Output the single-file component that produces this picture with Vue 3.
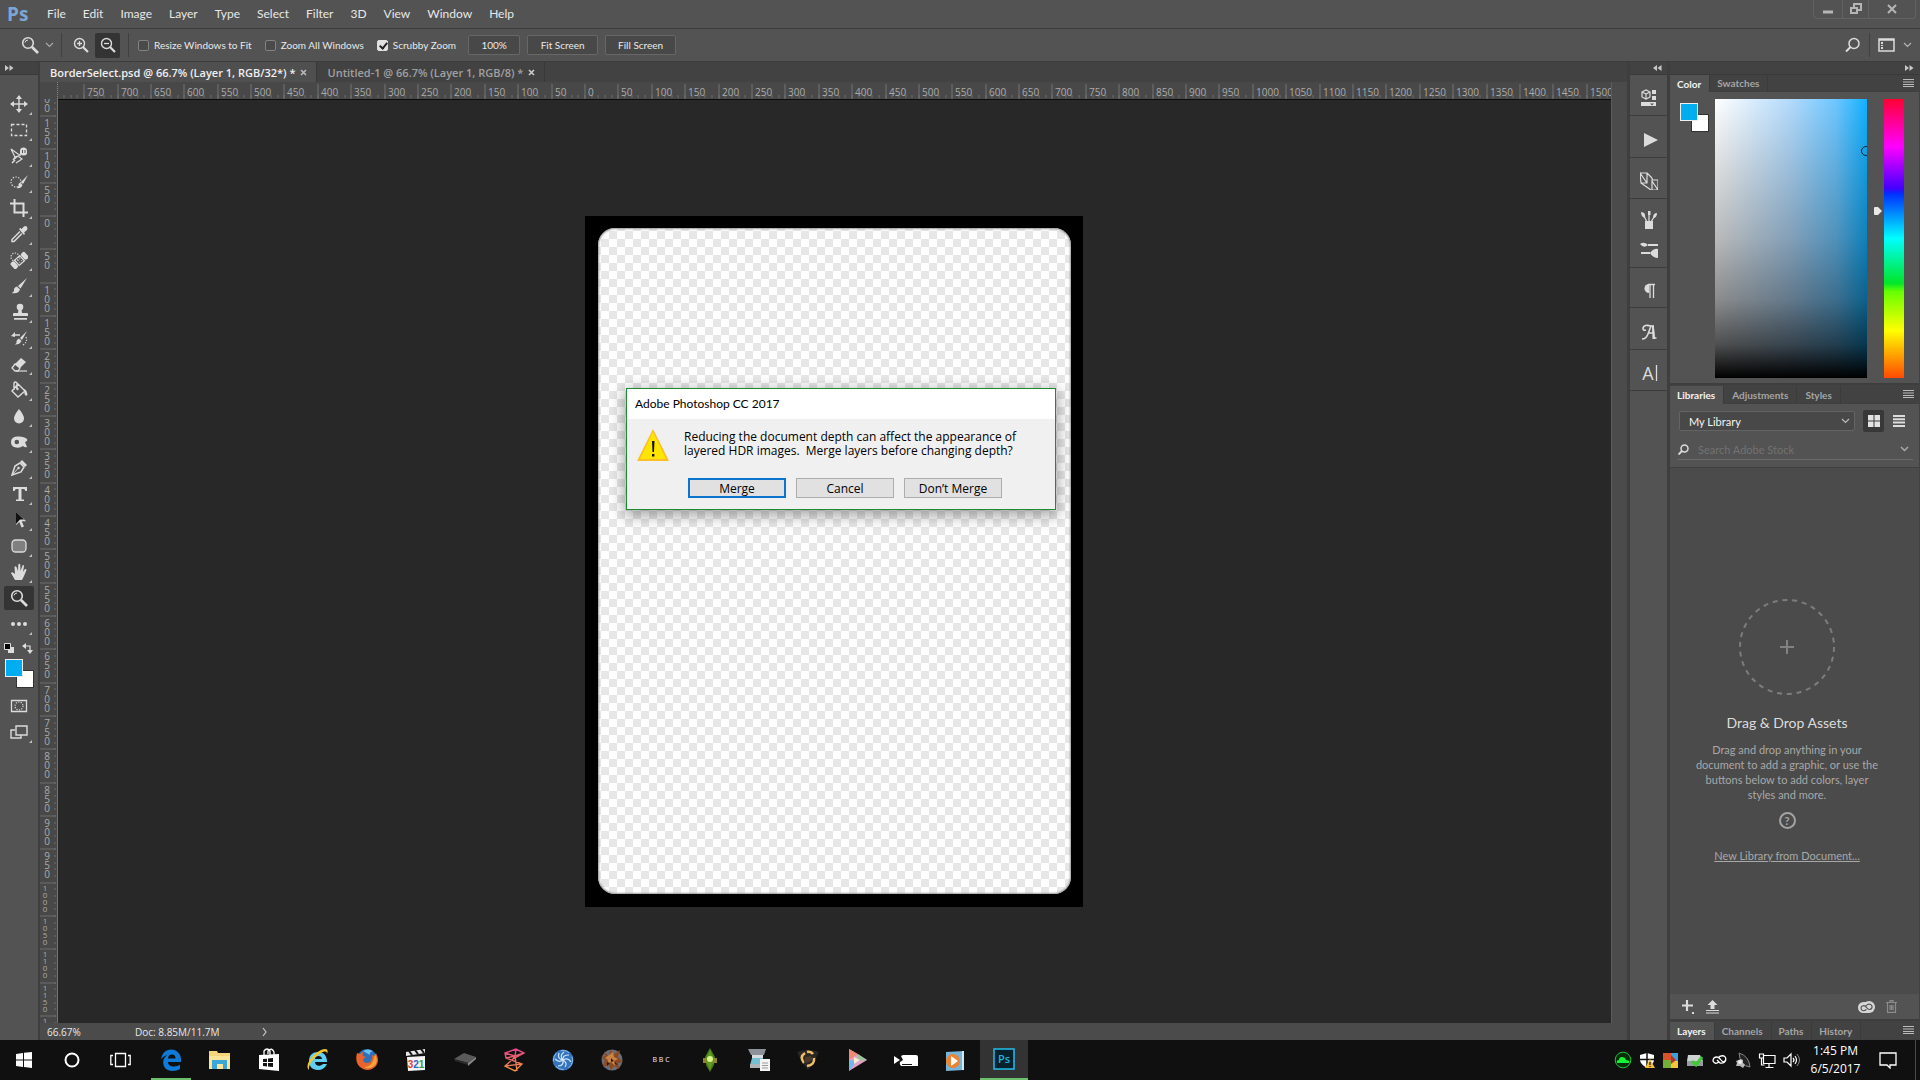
<script setup>
import { ref } from 'vue'

const menus = ['File', 'Edit', 'Image', 'Layer', 'Type', 'Select', 'Filter', '3D', 'View', 'Window', 'Help']

const resizeWindows = ref(false)
const zoomAll = ref(false)
const scrubby = ref(true)
const zoomLevel = ref('66.67%')

const F = '#dcdcdc'
const tools = [
  { name: 'Move', icon: `<path d="M9 1v16M1 9h16" stroke="${F}" stroke-width="1.4"/><path d="M9 0l3 4H6zM9 18l3-4H6zM0 9l4-3v6zM18 9l-4-3v6z" fill="${F}"/>` },
  { name: 'Rectangular Marquee', icon: `<rect x="1.5" y="3.5" width="15" height="11" fill="none" stroke="${F}" stroke-width="1.3" stroke-dasharray="3 2"/>` },
  { name: 'Magnetic Lasso', icon: `<path d="M1 2l7 5 3 1M1 2l4 8-2 3M3 13l5-4 4 3-6 4M5 10l6-2" fill="none" stroke="${F}" stroke-width="1.2"/><path d="M10 7V4q0-3.500 3.500-3.500T17 4v3q-3 3-7 0z" fill="${F}"/><path d="M12.500 3v3M15 3v3" stroke="#535353"/><path d="M2 16l3-3" stroke="${F}" stroke-width="1.600"/>` },
  { name: 'Quick Selection', icon: `<circle cx="6" cy="9" r="5" fill="none" stroke="${F}" stroke-width="1.200" stroke-dasharray="1.300 1.500"/><path d="M18 2l-7 7 2 2z" fill="${F}"/><path d="M10 9.500l2.500 2.500q-1.500 4-6 3 2.500-1 2-4z" fill="${F}"/>` },
  { name: 'Crop', icon: `<path d="M4.500 0v13.500H18M0 4.500h13.500V18" fill="none" stroke="${F}" stroke-width="2"/>` },
  { name: 'Eyedropper', icon: `<path d="M10 6.500l-8 8v2h2l8-8" fill="none" stroke="${F}" stroke-width="1.500"/><path d="M9 4l1.500-1 1 1L14 1.500q2-1 3 .5t0 3L14 7.500l1 1L14 10z" fill="${F}"/>` },
  { name: 'Spot Healing Brush', icon: `<circle cx="5" cy="6" r="4" fill="none" stroke="${F}" stroke-width="1.200" stroke-dasharray="1.200 1.400"/><g transform="rotate(-42 9.500 9.500)"><rect x="0" y="5.500" width="5" height="8" rx="2" fill="${F}"/><rect x="14" y="5.500" width="5" height="8" rx="2" fill="${F}"/><rect x="6" y="6" width="7" height="7" fill="none" stroke="${F}" stroke-width="1.300"/><path d="M8 8h1v1H8zM10.500 8h1v1h-1zM8 10.500h1v1H8zM10.500 10.500h1v1h-1z" fill="${F}"/></g>` },
  { name: 'Brush', icon: `<path d="M17 1l-9 8 2.500 2.500z" fill="${F}"/><path d="M7 9.500l3 3q-2 5-8.500 3.500 3-1 2.500-4 1-2.500 3-2.500z" fill="${F}"/>` },
  { name: 'Clone Stamp', icon: `<circle cx="10" cy="4" r="3.300" fill="${F}"/><path d="M8.500 6h3l.5 4h5q1 0 1 1v2H3v-2q0-1 1-1h4zM4 15h13v1.700H4z" fill="${F}"/>` },
  { name: 'History Brush', icon: `<path d="M17 2l-7 7 2 2z" fill="${F}"/><path d="M9 9.500l2.500 2.500q-2 4-7 3.500 2.500-1 2-3.500 1-2 2.500-2.500zM5 3v5L1 7z" fill="${F}"/><path d="M4 6h6" stroke="${F}" stroke-width="1.500"/><path d="M16 8q2 5-3 8" fill="none" stroke="${F}" stroke-width="1.200" stroke-dasharray="1.200 1.500"/>` },
  { name: 'Eraser', icon: `<path d="M11 3l5 4-6 6-5-4z" fill="${F}"/><path d="M5 9l5 4-2 3H5l-3-3z" fill="none" stroke="${F}" stroke-width="1.300"/><path d="M6 16h11" stroke="${F}" stroke-width="1.200"/>` },
  { name: 'Paint Bucket', icon: `<path d="M8 3l7 7-7 6-6-6zM4 9V2q1-2 3 0v6" fill="none" stroke="${F}" stroke-width="1.400"/><path d="M14 8q3 1 3.500 6-2 2-3-1z" fill="${F}"/><circle cx="7.500" cy="8" r="1.200" fill="${F}"/>` },
  { name: 'Blur', icon: `<path d="M9 2q5 6 5 9.500a5 5 0 0 1-10 0Q4 8 9 2z" fill="${F}"/>` },
  { name: 'Burn', icon: `<path fill-rule="evenodd" d="M1 9q0-5 6-5.500 7-.5 10 2.500 1 2-2 3l2 5q-2 1-4-1-4 3-9 1-3-1.500-3-5zm3.500 0a2.300 2.300 0 1 0 4.600 0 2.300 2.300 0 0 0-4.600 0z" fill="${F}"/>` },
  { name: 'Pen', icon: `<path d="M2 16l3-9 5-3 4 4-3 5z" fill="none" stroke="${F}" stroke-width="1.500"/><path d="M2 16l5.500-6" stroke="${F}"/><circle cx="8.500" cy="9" r="1.300" fill="${F}"/><path d="M10 3l2-2 5 5-2 2z" fill="${F}"/>` },
  { name: 'Type', icon: `<path d="M3 2h14v4h-1.500q-.5-2-2-2H11.500v10.500H14V16H6v-1.500h2.500V4H6.500q-1.500 0-2 2H3z" fill="${F}"/>` },
  { name: 'Path Selection', icon: `<path d="M6 1v13l3.300-3 2.200 5.500 2.500-1-2.300-5.300h4.500z" fill="${F}"/><path d="M6 1v12l4-4.500h4z" fill="#111"/>` },
  { name: 'Rounded Rectangle', icon: `<rect x="2" y="3" width="14" height="12" rx="3.500" fill="#808080" stroke="${F}" stroke-width="1.300"/>` },
  { name: 'Hand', icon: `<path d="M5 17L1 10q1-2 4 1L4.500 4q1-1.500 2 0L8 8l.3-6.500q1-1.500 2 0L10.500 8l2-5.500q1.500-1 1.500.5l-1 6 2-3q1.500-.5 1.500 1L14 13l-2 4z" fill="${F}"/>` },
  { name: 'Zoom', active: true, icon: `<circle cx="7" cy="7" r="5.300" fill="none" stroke="${F}" stroke-width="1.600"/><path d="M4 6.500Q4.500 4 7 4" fill="none" stroke="${F}"/><path d="M11 11l6 6" stroke="${F}" stroke-width="2.600"/>` },
  { name: 'Edit Toolbar', icon: `<circle cx="3" cy="9" r="2" fill="${F}"/><circle cx="9" cy="9" r="2" fill="${F}"/><circle cx="15" cy="9" r="2" fill="${F}"/>` },
]

const docks = [
  { name: 'Properties', h: 41, icon: `<path d="M2 3l4-2 4 2v5l-4 2-4-2zM2 3l4 2 4-2M6 5v5" fill="none" stroke="${F}" stroke-width="1.200"/><path d="M12 1h4v4h-4zM12 7h4v4h-4zM1 13h15v4H1z" fill="${F}"/><path d="M10 14.500h4l-2 2z" fill="#555"/>` },
  { name: 'Actions', h: 42, icon: `<path d="M4 2l14 7-14 7z" fill="${F}"/>` },
  { name: 'Clone Source', h: 41, icon: `<path d="M0 1h7v10H1L0 1l7 10M7 1l5 5M1 11l10 7M12 8h6v10h-6zM12 9l6 9M11 5l2 3" fill="none" stroke="${F}" stroke-width="1.200"/>` },
  { name: 'Brush Presets', h: 36, icon: `<path d="M5 10h8v8H5z" fill="${F}"/><path d="M7 11L4 5M9 11V4M11 11l3-5" stroke="${F}" stroke-width="1.300"/><path d="M1 1q5 0 4 6-4-1-4-6zM8 0h2.500v4H8zM17 2q-4 0-4 5 4 0 4-5z" fill="${F}"/>`, joined: true },
  { name: 'Brush', h: 33, low: true, icon: `<path d="M8 5h10M1 13h9" stroke="${F}" stroke-width="2"/><path d="M0 4q4-3 8 1-4 4-8-1zM10 13q4-5 8-4v9q-5 0-8-5z" fill="${F}"/>` },
  { name: 'Paragraph', h: 40, icon: `<path d="M9 2a4.500 4.500 0 0 0 0 9z" fill="${F}"/><path d="M10 2v14M13.500 2v14M8 2.500h7" stroke="${F}" stroke-width="1.300"/>` },
  { name: 'Glyphs', h: 42, icon: `<path d="M2 16q4 0 6-5l3-8h2l1 12h2.500M8 10h6M11 3Q4 1 3 5q0 3 3 2" fill="none" stroke="${F}" stroke-width="1.600"/><path d="M12 2.500h1.800L15 16h-2.500z" fill="${F}"/>` },
  { name: 'Character', h: 41, icon: `<text x="8" y="16" text-anchor="middle" font-family="Open Sans, sans-serif" font-size="18" fill="${F}">A</text><path d="M16.500 1v16" stroke="${F}" stroke-width="1.300"/>` },
]

const taskbar = [
  { name: 'Start', icon: `<path d="M4 6l7-1v6.500H4zM12 4.800L20 4v7.500h-8zM4 12.500h7V19l-7-1zM12 12.500h8V20l-8-1z" fill="#fff"/>` },
  { name: 'Cortana', icon: `<circle cx="11" cy="12" r="6.500" fill="none" stroke="#fff" stroke-width="2"/>` },
  { name: 'Task View', icon: `<path d="M5.500 5.500h10v13h-10zM3 7.500H.8v9H3M18 7.500h2.200v9H18" fill="none" stroke="#fff" stroke-width="1.300"/>` },
  { name: 'Edge', open: true, icon: `<path d="M2 11.500C3 5 7 1.500 12 1.500c6 0 10 4.500 10 10v2.500H9c.3 3.500 3 4.500 6 4.500 2.300 0 4.300-.7 6-1.700v4.200c-2 1.200-4.500 2-7.500 2C7.500 23 4 19 4.200 14c.1-3 1.700-5.500 4.300-7-3 .6-5.200 2.300-6.500 4.500zM9 10.500h7.500c0-2.500-1.200-4-3.500-4s-3.700 1.600-4 4z" fill="#0f7ad8"/>` },
  { name: 'File Explorer', icon: `<path d="M1 3h8l1 2h12v16H1z" fill="#f5d67a"/><path d="M1 8h21v13H1z" fill="#fbe59b"/><path d="M4 12h15v9h-4v-5H9v5H4z" fill="#3aa7d8"/>` },
  { name: 'Store', icon: `<path d="M2 7l20-1v17L2 21z" fill="#fff"/><path d="M7 8V3q3-4 6 0v4M11 6V3q4-4 6 1v3" fill="none" stroke="#fff" stroke-width="1.300"/><path d="M6 11l4-.3V14H6zM11 10.500l5-.5v4h-5zM6 15h4v3.500L6 18zM11 15h5v4l-5-.5z" fill="#111"/>` },
  { name: 'Internet Explorer', icon: `<path d="M3 13C3 7 7 4 12 4c6 0 9 4 9 10H9c0 4 5 5 8 2h4c-2 4-5 6-9 6-6 0-9-4-9-9zm6-2h7c0-4-7-4-7 0z" fill="#5fd0f3"/><path d="M3 22C-2 18 6 6 15 2c5-2 8-1 6 4 0-3-2-3-6-1C8 9 2 17 3 22z" fill="#f4c62e"/>` },
  { name: 'Firefox', icon: `<circle cx="12" cy="11" r="10" fill="#2f70b8"/><path d="M8 3q5-3 10 0-4 1-3 4z" fill="#67c2ef"/><path d="M2 5l3 1q2-2 4-2-2 2-1 4l3 1-3 2q0 4 4 4 6-1 5-8 3 2 3 0l1-2q4 8 0 13-6 6-13 3Q-1 16 2 5z" fill="#e8642c"/><path d="M20 6q4 8-1 12-5 4-10 1 9 0 11-13z" fill="#f8a53a"/>` },
  { name: 'Media Player Classic', icon: `<path d="M2 4l19-3v4L2 8z" fill="#e8e8e8"/><path d="M5 3l3 4M11 2l3 4M17 1l3 4" stroke="#111" stroke-width="2"/><path d="M3 9l18-1v14l-17 1z" fill="#f4f4f4"/><text x="12" y="20" text-anchor="middle" font-family="Liberation Sans, sans-serif" font-size="10" font-weight="bold"><tspan fill="#d6452a">3</tspan><tspan fill="#2b66c4">2</tspan><tspan fill="#3a9c3a">1</tspan></text>` },
  { name: 'Drive', icon: `<path d="M1 11l10-6 12 4-8 6z" fill="#5a5a5a"/><path d="M1 11l14 4v2L2 13z" fill="#2c2c2c"/><path d="M15 15l8-6v2l-8 7z" fill="#8a8a8a"/>` },
  { name: 'Mesh', icon: `<defs><linearGradient id="mesh" x1="0" y1="0" x2="0" y2="24" gradientUnits="userSpaceOnUse"><stop stop-color="#e0408c"/><stop offset="1" stop-color="#f39a3c"/></linearGradient></defs><path d="M14 1L3 5l1 5 16 6-7 7-10-5 8-7 11-6zM3 5l10 3 9-3M4 10l9-2 2 15M3 18l17-2M14 1l-1 7-2 3" fill="none" stroke="url(#mesh)" stroke-width="1.400"/>` },
  { name: 'Swirl', icon: `<circle cx="12" cy="12" r="10.500" fill="#3473bd"/><path d="M12 12q-4-4 1-8M12 12q-1-5 6-5M12 12q5-3 8 2M12 12q5 3 2 7M12 12q1 6-5 6M12 12q-4 3-8-1M12 12q-6-1-4-7" fill="none" stroke="#cfe5fa" stroke-width="1.200"/><circle cx="12" cy="12" r="9.500" fill="none" stroke="#8fbdea" stroke-dasharray="9 5"/>` },
  { name: 'Game', icon: `<circle cx="12" cy="12" r="10.500" fill="#6c6d75"/><path d="M4 4l5 4 1-6 4 4 6-4-2 7 5 5-5 1 1 6-5-3-3 4-2-5-6 2 2-7-4-3 4-1z" fill="#8a4a24"/><path d="M9 7l4-3 1 5 4 2-4 2 1 5-4-4-4 3 1-5-3-2z" fill="#c98444"/><path d="M11 10l3 3-3 1zM7 14l3 1-3 3zM15 14l3 3-3-1z" fill="#2c1b18"/>` },
  { name: 'BBC', icon: `<text x="12" y="14" text-anchor="middle" font-family="Open Sans, sans-serif" font-size="7" fill="#f0f0f0">B B C</text>` },
  { name: 'Plumbob', icon: `<path d="M12 0l5 9-1 8-4 7-4-7-1-8z" fill="#4a7a18"/><path d="M5 10h14v5h-4l-3 5-3-5H5z" fill="#8d8430"/><path d="M12 2l4 9-4 11-4-11z" fill="#5c9a22"/><circle cx="12" cy="11" r="3" fill="#d8f58c"/>` },
  { name: 'Scanner', icon: `<path d="M1 1h18l-2 6H4z" fill="#8c9298"/><path d="M5 7h11v5H5z" fill="#d8dde0"/><path d="M5 10h11v7H3z" fill="#75bfd2"/><path d="M3 16h12v4H3z" fill="#aeb5ba"/><path d="M13 11h10v12H13z" fill="#f4f4f4"/><path d="M15 15h6M15 17.500h6M15 20h6" stroke="#999"/>` },
  { name: 'Sync', icon: `<path d="M1 4q5-2 11-2t11 2l-5 10-6 8-6-8z" fill="#2a2723"/><path d="M8 15Q3 9 9 5M11 18q8-1 7-8M11 4q4-1 6 2" fill="none" stroke="#eebd69" stroke-width="2.600"/><path d="M9 9l6-1 2 3-4 3-5 1z" fill="#4b3a2a"/>` },
  { name: 'Play', icon: `<path d="M4 1l18 11L4 23z" fill="#e79fc8"/><path d="M4 1l9 5-9 6z" fill="#ee8a78"/><path d="M13 6l9 6-10 1z" fill="#9ec49a"/><path d="M4 12l8 1-8 10z" fill="#6fb9e8"/><path d="M9 9l6 3-6 4z" fill="#f6eed3"/>` },
  { name: 'Camera', icon: `<path d="M0 8l6 4-6 4zM9 7h13q2 0 2 2v9H7q-2-2-1-4l3-2-2-4z" fill="#fff"/><path d="M8 16.500h10" stroke="#111"/>` },
  { name: 'Windows Media Player', icon: `<path d="M3 4l18-1v19l-18 1z" fill="#78b4d8"/><path d="M19 3h2v19h-2z" fill="#d1e9f6"/><circle cx="10" cy="13" r="7" fill="#ec8331"/><path d="M8 8l7 5-7 5z" fill="#fff"/>` },
  { name: 'Photoshop', open: true, current: true, icon: `<rect x="2" y="1" width="20" height="20" fill="#06202c" stroke="#22b5df" stroke-width="1.600"/><text x="12" y="15" text-anchor="middle" font-family="Open Sans, sans-serif" font-size="11" font-weight="600" fill="#22b5df">Ps</text>` },
]

const tray = [
  { name: 'Cloud backup', icon: `<circle cx="9" cy="9" r="7.800" fill="#082c08" stroke="#1bc531" stroke-width="1"/><path d="M3 12q-1-3 2-3 0-3 3-3t4 3q4 0 3 3z" fill="#12f435"/>` },
  { name: 'Windows Defender', icon: `<path d="M9 2l7 2v5q0 4-7 8-7-4-7-8V4z" fill="#fff"/><path d="M9 2v15M2 8.500h14" stroke="#111" stroke-width="1.500"/><path d="M12 8l5 9H7z" fill="#f7bd31"/><path d="M12 11v3M12 15v1" stroke="#222" stroke-width="1.300"/>` },
  { name: 'Updater', icon: `<path d="M1 2h8v7H1z" fill="#db512c"/><path d="M9 2h7v8H9z" fill="#3e9fd9"/><path d="M1 9h8v8H1z" fill="#75ad3b"/><path d="M9 10h7v7H9z" fill="#f5c439"/><path d="M9 4l5 5-5 4z" fill="#bd302c"/>` },
  { name: 'Safely Remove', icon: `<path d="M2 4h12l3 6v4H1v-4z" fill="#cdd3d3"/><path d="M1 10h16v5H1z" fill="#90a09a"/><path d="M6 10l4 4 6-8" fill="none" stroke="#43c935" stroke-width="3"/>` },
  { name: 'Creative Cloud', icon: `<path d="M9 11Q5 14 3 10q0-4 4-4 2 0 4 3 2 3 4 1 2-3-1-5-4-1-6 2M7 9l3 3q4 1 6-3" fill="none" stroke="#fff" stroke-width="1.300"/>` },
  { name: 'Satellite', icon: `<path d="M5 2q10 3 11 14-10-1-11-14z" fill="#222" stroke="#888"/><path d="M7 8l2 1v3l2 2-2 3-3-2H2l1-3-1-2z" fill="#b8b8b8"/><circle cx="6" cy="11" r="2" fill="#eee"/>` },
  { name: 'Network', icon: `<path d="M5.500 4.500H17v8H5.500zM11 13v3M7.500 16.500h8M1.500 3v4h4V3zM3.500 7v7h3" fill="none" stroke="#fff" stroke-width="1.200"/>` },
  { name: 'Volume', icon: `<path d="M2 7h3l4-4v12l-4-4H2zM11 7q2 2 0 4M13 5q3 4 0 8" fill="none" stroke="#fff" stroke-width="1.200"/><path d="M15 3q5 6 0 12" fill="none" stroke="#888"/>` },
]

// Screen pixels covered by one labelled interval of 50 document pixels.
const H_STEP = 33.39
const V_STEP = 100 / 3
const H_ORIGIN = 527
const V_ORIGIN = 117

const hMajor = Array.from({ length: 46 }, (_, i) => i - 15).map((n) => ({
  x: Math.round(H_ORIGIN + n * H_STEP),
  label: Math.abs(n * 50),
}))
const vMajor = Array.from({ length: 29 }, (_, i) => i - 4).map((n) => {
  const y = Math.round(V_ORIGIN + n * V_STEP)
  const chars = String(Math.abs(n * 50)).split('')
  const tiny = chars.length > 3
  return {
    y,
    tiny,
    digits: chars.map((d, i) => ({ d, y: tiny ? y + 8 + i * 7 : y + 11 + i * 9 })),
  }
})
const hMinor = Array.from({ length: 300 }, (_, i) => `M${Math.round(H_ORIGIN + (i - 79) * H_STEP / 5)} 13v3`).join('')
const vMinor = Array.from({ length: 160 }, (_, i) => `M14 ${Math.round(V_ORIGIN + (i - 17) * V_STEP / 5)}h2`).join('')
</script>

<template>
  <div class="app">
    <header class="menubar">
      <span class="logo">Ps</span>
      <nav class="menus">
        <button v-for="m in menus" :key="m" type="button">{{ m }}</button>
      </nav>
      <div class="winctl">
        <button type="button" class="w-min" aria-label="Minimize"><svg width="12" height="12"><path d="M1 9h10" stroke="#b5b5b5" stroke-width="3" /></svg></button>
        <button type="button" class="w-res" aria-label="Restore"><svg width="12" height="12"><path d="M4 4V1h7v6H8M1 5h6v5H1z" fill="none" stroke="#b5b5b5" stroke-width="2" /></svg></button>
        <button type="button" class="w-close" aria-label="Close"><svg width="12" height="12"><path d="M2 2l8 8M10 2l-8 8" stroke="#b5b5b5" stroke-width="2" /></svg></button>
      </div>
    </header>

    <div class="options">
      <button type="button" class="ob current-tool" aria-label="Zoom tool"><svg width="18" height="18" v-html="tools[19].icon" /></button>
      <svg class="caret" width="9" height="6"><path d="M1 1l3.500 3.500L8 1" fill="none" stroke="#aaa" stroke-width="1.200" /></svg>
      <i class="vr first" />
      <button type="button" class="ob" aria-label="Zoom in"><svg width="16" height="16"><circle cx="6.500" cy="6.500" r="5" fill="none" stroke="#dcdcdc" stroke-width="1.400" /><path d="M10 10l5 5" stroke="#dcdcdc" stroke-width="2.200" /><path d="M4 6.500h5M6.500 4v5" stroke="#dcdcdc" stroke-width="1.300" /></svg></button>
      <button type="button" class="ob on" aria-label="Zoom out"><svg width="16" height="16"><circle cx="6.500" cy="6.500" r="5" fill="none" stroke="#dcdcdc" stroke-width="1.400" /><path d="M10 10l5 5" stroke="#dcdcdc" stroke-width="2.200" /><path d="M4 6.500h5" stroke="#dcdcdc" stroke-width="1.300" /></svg></button>
      <i class="vr second" />
      <label class="check"><input v-model="resizeWindows" type="checkbox"><span>Resize Windows to Fit</span></label>
      <label class="check"><input v-model="zoomAll" type="checkbox"><span>Zoom All Windows</span></label>
      <label class="check"><input v-model="scrubby" type="checkbox"><span>Scrubby Zoom</span></label>
      <div class="fits">
        <button type="button" class="fit small">100%</button>
        <button type="button" class="fit">Fit Screen</button>
        <button type="button" class="fit">Fill Screen</button>
      </div>
      <div class="opt-right">
        <svg width="16" height="16"><circle cx="9" cy="6.500" r="5" fill="none" stroke="#dcdcdc" stroke-width="1.500" /><path d="M5.500 10L1 14.500" stroke="#dcdcdc" stroke-width="2" /></svg>
        <i class="vr" />
        <svg width="17" height="14"><path d="M1 1h15v12H1zM1 2h15" fill="none" stroke="#dcdcdc" stroke-width="1.500" /><path d="M3 4h2v2H3zM3 7h2v1H3zM3 9h2v2H3z" fill="#dcdcdc" /></svg>
        <svg width="9" height="6"><path d="M1 1l3.500 3.500L8 1" fill="none" stroke="#b5b5b5" stroke-width="1.200" /></svg>
      </div>
    </div>

    <main class="work">
      <aside class="toolbar">
        <div class="strip"><svg width="9" height="6"><path d="M0 0l4 3-4 3zM4.500 0l4 3-4 3z" fill="#c8c8c8" /></svg></div>
        <div class="grip" />
        <button v-for="t in tools" :key="t.name" type="button" class="tool" :class="{ on: t.active }" :aria-label="t.name">
          <svg width="18" height="18" v-html="t.icon" />
          <i v-if="!t.active" class="corner" />
        </button>
        <div class="mini">
          <svg width="11" height="11"><path d="M4 4h6v6H4z" fill="#ddd" /><path d="M.5 .5h6v6h-6z" fill="#000" stroke="#ddd" /></svg>
          <svg width="11" height="11"><path d="M3 3h5v5" fill="none" stroke="#ddd" stroke-width="1.200" /><path d="M0 3l4-3v6zM8 11L5 7h6z" fill="#ddd" /></svg>
        </div>
        <div class="swatches"><i class="bg" /><i class="fg" /></div>
        <button type="button" class="tool" aria-label="Quick Mask"><svg width="18" height="18"><path d="M1.500 3.500h15v11h-15z" fill="none" stroke="#dcdcdc" stroke-width="1.300" /><circle cx="9" cy="9" r="4" fill="none" stroke="#dcdcdc" stroke-width="1.200" stroke-dasharray="1.200 1.300" /></svg></button>
        <button type="button" class="tool" aria-label="Screen Mode"><svg width="18" height="18"><path d="M5 7H1v8h10v-3M6 3h11v9H6z" fill="none" stroke="#dcdcdc" stroke-width="1.400" /></svg><i class="corner" /></button>
      </aside>

      <section class="doc-area">
        <div class="doc-tabs">
          <div class="doc-tab active"><button type="button" class="name">BorderSelect.psd @ 66.7% (Layer 1, RGB/32*) *</button><button type="button" class="x" aria-label="Close BorderSelect.psd"><svg width="7" height="7"><path d="M1 1l5 5M6 1L1 6" stroke="#bbb" stroke-width="1.600" /></svg></button></div>
          <div class="doc-tab"><button type="button" class="name">Untitled-1 @ 66.7% (Layer 1, RGB/8) *</button><button type="button" class="x" aria-label="Close Untitled-1"><svg width="7" height="7"><path d="M1 1l5 5M6 1L1 6" stroke="#ccc" stroke-width="1.600" /></svg></button></div>
        </div>
        <div class="doc-body">
          <div class="doc-main">
            <div class="top-ruler">
              <i class="ruler-corner" />
              <svg class="hruler" height="17">
                <path :d="hMinor" stroke="#6c6c6c" />
                <g v-for="m in hMajor" :key="m.x">
                  <path :d="`M${m.x} 2v15`" stroke="#737373" />
                  <text :x="m.x + 3" y="14">{{ m.label }}</text>
                </g>
              </svg>
            </div>
            <div class="view">
              <svg class="vruler" width="18">
                <path :d="vMinor" stroke="#6c6c6c" />
                <g v-for="m in vMajor" :key="m.y">
                  <path :d="`M0 ${m.y}h16`" stroke="#6c6c6c" />
                  <text v-for="g in m.digits" :key="g.y" :x="m.tiny ? 5 : 7" :y="g.y" text-anchor="middle" :class="{ tiny: m.tiny }">{{ g.d }}</text>
                </g>
                <path d="M17.500 0v2000" stroke="#747474" />
              </svg>
              <div class="canvas">
                <div class="artboard"><div class="paper" /></div>
                <div class="dialog" role="dialog" aria-labelledby="dlg-title">
                  <h1 id="dlg-title">Adobe Photoshop CC 2017</h1>
                  <div class="msg">
                    <svg width="32" height="32"><path d="M16 0l16 32H0z" fill="#fcbf28" /><path d="M16 3l13 27H3z" fill="#ffe500" /><path d="M15 12h2.500l-.5 11h-1.500zM15 25h2.400v2.500H15z" fill="#111" /></svg>
                    <p>Reducing the document depth can affect the appearance of<br>layered HDR images.&nbsp; Merge layers before changing depth?</p>
                  </div>
                  <div class="actions">
                    <button type="button" class="default">Merge</button>
                    <button type="button">Cancel</button>
                    <button type="button">Don’t Merge</button>
                  </div>
                </div>
              </div>
            </div>
          </div>
          <div class="vscroll" />
        </div>
        <footer class="status">
          <input v-model="zoomLevel" aria-label="Zoom level">
          <span class="docsize">Doc: 8.85M/11.7M</span>
          <svg width="6" height="10"><path d="M1 1l3 4-3 4" fill="none" stroke="#c8c8c8" stroke-width="1.200" /></svg>
        </footer>
      </section>

      <aside class="dock">
        <div class="strip end"><svg width="9" height="6"><path d="M4 0L0 3l4 3zM8.500 0l-4 3 4 3z" fill="#c8c8c8" /></svg></div>
        <button v-for="d in docks" :key="d.name" type="button" class="dock-item" :class="{ joined: d.joined, low: d.low }" :style="{ height: d.h + 'px' }" :aria-label="d.name">
          <svg width="18" height="18" v-html="d.icon" />
        </button>
      </aside>

      <aside class="panels">
        <div class="strip end"><svg width="9" height="6"><path d="M0 0l4 3-4 3zM4.500 0l4 3-4 3z" fill="#c8c8c8" /></svg></div>
        <div class="ptabs">
          <button type="button" class="active">Color</button><button type="button">Swatches</button>
          <svg class="burger" width="11" height="8"><path d="M0 .5h11M0 3h11M0 5.500h11M0 7.500h11" stroke="#bbb" /></svg>
        </div>
        <section class="color">
          <div class="swatches big"><i class="bg" /><i class="fg" /></div>
          <div class="field"><i class="ring" /></div>
          <div class="hue"><svg class="knob" width="8" height="8"><path d="M0 1q0-1 1-1h3l4 4-4 4H1q-1 0-1-1z" fill="#e8e8e8" /></svg></div>
        </section>
        <div class="ptabs libs">
          <button type="button" class="active">Libraries</button><button type="button">Adjustments</button><button type="button">Styles</button>
          <svg class="burger" width="11" height="8"><path d="M0 .5h11M0 3h11M0 5.500h11M0 7.500h11" stroke="#bbb" /></svg>
        </div>
        <section class="lib-head">
          <div class="lib-row">
            <div class="pick">
              <select aria-label="Library"><option>My Library</option></select>
              <svg width="9" height="6"><path d="M1 1l3.500 3.500L8 1" fill="none" stroke="#bbb" stroke-width="1.200" /></svg>
            </div>
            <button type="button" class="mode on" aria-label="Grid view"><svg width="12" height="12"><path d="M0 0h5.500v5.500H0zM6.500 0H12v5.500H6.500zM0 6.500h5.500V12H0zM6.500 6.500H12V12H6.500z" fill="#e2e2e2" /></svg></button>
            <button type="button" class="mode" aria-label="List view"><svg width="12" height="12"><path d="M0 1h12M0 4.300h12M0 7.600h12M0 11h12" stroke="#dcdcdc" stroke-width="2" /></svg></button>
          </div>
          <div class="search">
            <svg width="11" height="11"><circle cx="6.500" cy="4.500" r="3.500" fill="none" stroke="#dcdcdc" stroke-width="1.500" /><path d="M4 7l-3.500 3.500" stroke="#dcdcdc" stroke-width="1.800" /></svg>
            <input type="text" placeholder="Search Adobe Stock" aria-label="Search Adobe Stock">
            <svg width="9" height="6"><path d="M1 1l3.500 3.500L8 1" fill="none" stroke="#aaa" stroke-width="1.500" /></svg>
          </div>
        </section>
        <section class="drop">
          <svg width="98" height="98"><circle cx="49" cy="49" r="47" fill="none" stroke="#7d7d7d" stroke-width="2" stroke-dasharray="5 4.840" /><path d="M49 42v14M42 49h14" stroke="#828282" stroke-width="2" /></svg>
          <h2>Drag &amp; Drop Assets</h2>
          <p>Drag and drop anything in your<br>document to add a graphic, or use the<br>buttons below to add colors, layer<br>styles and more.</p>
          <span class="help">?</span>
          <a href="#">New Library from Document...</a>
        </section>
        <footer class="lib-foot">
          <svg width="14" height="15"><path d="M6 1v11M1 6.500h11" stroke="#dcdcdc" stroke-width="2.200" /><path d="M11 13h2v2h-2z" fill="#dcdcdc" /></svg>
          <svg width="13" height="14"><path d="M6.500 0l5 5H8.500v4h-4V5h-3z" fill="#dcdcdc" /><path d="M0 10.500h13M0 13h13" stroke="#dcdcdc" /></svg>
          <span class="spacer" />
          <svg width="17" height="12"><rect x="0" y="1" width="14" height="11" rx="5.500" fill="#d6d6d6" /><circle cx="11" cy="6" r="6" fill="#d6d6d6" /><path d="M8.500 8.500Q5 11 3.500 8.500T5 4.800q2-.5 3.500 1.700t3.500 2q2.500-1 2-3.500-1.500-2.500-4.500-1.500Q7.500 4.500 8 6" fill="none" stroke="#555" stroke-width="1.200" /></svg>
          <svg width="11" height="13"><path d="M0 2.500h11M4 2V.7h3V2M1.500 3v9.300h8V3M4 5v5M5.500 5v5M7 5v5" fill="none" stroke="#8b8b8b" stroke-width="1.200" /></svg>
        </footer>
        <div class="ptabs layers">
          <button type="button" class="active">Layers</button><button type="button">Channels</button><button type="button">Paths</button><button type="button">History</button>
          <svg class="burger" width="11" height="8"><path d="M0 .5h11M0 3h11M0 5.500h11M0 7.500h11" stroke="#bbb" /></svg>
        </div>
      </aside>
    </main>

    <footer class="taskbar">
      <div class="apps">
        <button v-for="a in taskbar" :key="a.name" type="button" :class="{ current: a.current, open: a.open }" :aria-label="a.name">
          <svg width="24" height="24" v-html="a.icon" />
        </button>
      </div>
      <div class="tray">
        <svg v-for="t in tray" :key="t.name" width="18" height="18" v-html="t.icon" />
      </div>
      <div class="clock"><span>1:45 PM</span><span>6/5/2017</span></div>
      <button type="button" class="notes" aria-label="Notifications"><svg width="18" height="18"><path d="M1 2h16v12h-6v3l-3-3H1z" fill="none" stroke="#fff" stroke-width="1.300" /></svg></button>
      <i class="show-desktop" />
    </footer>
  </div>
</template>

<style>
html, body { margin: 0; height: 100%; background: #535353; }
#app { height: 100%; }
</style>

<style scoped>
.app { height: 100vh; display: flex; flex-direction: column; overflow: hidden; font-family: Lato, "Open Sans", sans-serif; font-size: 10px; color: #e8e8e8; background: #535353; }
button, input, select { font: inherit; color: inherit; margin: 0; padding: 0; border: 0; background: none; }
button { display: flex; align-items: center; justify-content: center; white-space: nowrap; }
svg { display: block; flex: none; }
i { flex: none; }

.menubar { flex: none; height: 28px; display: flex; align-items: center; }
.logo { width: 38px; padding-left: 7px; box-sizing: border-box; font-family: "Open Sans", sans-serif; font-size: 19px; line-height: 24px; font-weight: 700; color: #7ba6d6; }
.menus { display: flex; font-size: 12px; }
.menus button { padding: 0 8px 1px 9px; height: 27px; }
.winctl { margin-left: auto; margin-right: 4px; align-self: flex-start; display: flex; border: 1px solid #626262; border-top: 0; border-radius: 0 0 4px 4px; }
.winctl button { height: 18px; box-sizing: border-box; }
.w-min { width: 28px; }
.w-res { width: 27px; border-left: 1px solid #626262; border-right: 1px solid #626262; }
.w-close { width: 46px; }

.options { flex: none; height: 34px; box-sizing: border-box; border-top: 1px solid #3c3c3c; border-bottom: 1px solid #3c3c3c; display: flex; align-items: center; }
.ob { width: 25px; height: 25px; }
.ob.on { background: #343434; border-radius: 2px; margin-left: 2px; }
.current-tool { margin-left: 17px; }
.caret { margin-left: 3px; }
.vr { width: 1px; height: 24px; background: #404040; }
.vr.first { margin: 0 6px 0 7px; }
.vr.second { margin: 0 9px 0 8px; }
.check { display: flex; align-items: center; gap: 5px; margin-right: 13px; }
.check input { appearance: none; width: 11px; height: 11px; box-sizing: border-box; border: 1px solid #828282; border-radius: 2px; background: #4a4a4a; }
.check input:checked { background: #e0e0e0; border-color: #e0e0e0; position: relative; }
.check input:checked::after { content: ""; position: absolute; left: 3px; top: 0; width: 3px; height: 6px; border: solid #222; border-width: 0 2px 2px 0; transform: rotate(40deg); }
.fits { display: flex; gap: 7px; margin-left: -1px; }
.fit { width: 71px; height: 20px; box-sizing: border-box; border: 1px solid #676767; border-radius: 2px; background: #484848; }
.fit.small { width: 52px; }
.opt-right { margin-left: auto; margin-right: 8px; display: flex; align-items: center; gap: 8px; }

.work { flex: 1; min-height: 0; display: flex; }
.strip { flex: none; height: 13px; background: #424242; border-bottom: 1px solid #3a3a3a; box-sizing: border-box; display: flex; align-items: center; padding: 0 5px; }
.strip.end { justify-content: flex-end; }

.toolbar { width: 38px; border-right: 2px solid #3e3e3e; display: flex; flex-direction: column; }
.grip { height: 16px; flex: none; }
.tool { position: relative; flex: none; height: 24px; margin: 1px 4px 1px 4px; border-radius: 2px; }
.tool.on { background: #343434; }
.corner { position: absolute; right: 2px; bottom: 1px; border-left: 3px solid transparent; border-bottom: 3px solid #c0c0c0; }
.mini { display: flex; gap: 7px; padding: 6px 4px 5px; }
.swatches { position: relative; width: 29px; height: 29px; margin: 0 0 5px 5px; flex: none; }
.swatches i { position: absolute; width: 16px; height: 16px; border: 1px solid #333; }
.swatches .bg { right: 0; bottom: 0; background: #fff; }
.swatches .fg { left: 0; top: 0; background: #00adef; border-color: #eee; }

.doc-area { flex: 1; min-width: 0; display: flex; flex-direction: column; }
.doc-tabs { flex: none; height: 20px; background: #424242; display: flex; font-family: "Open Sans", sans-serif; font-size: 11px; }
.doc-tab { display: flex; align-items: center; padding: 0 9px 0 10px; gap: 5px; font-weight: 600; color: #a0a0a0; border-right: 1px solid #383838; }
.doc-tab.active { background: #4f4f4f; color: #f0f0f0; }
.doc-body { flex: 1; min-height: 0; display: flex; }
.doc-main { flex: 1; min-width: 0; display: flex; flex-direction: column; }
.top-ruler { flex: none; height: 17px; display: flex; background: #484848; overflow: hidden; }
.ruler-corner { width: 18px; border-right: 1px dotted #888; box-sizing: border-box; }
.hruler { flex: 1; min-width: 0; overflow: hidden; }
.hruler text, .vruler text { font-family: "Open Sans", sans-serif; font-size: 10px; fill: #ababab; }
.vruler .tiny { font-size: 8px; }
.view { flex: 1; min-height: 0; display: flex; }
.vruler { height: 100%; background: #484848; overflow: hidden; }
.canvas { position: relative; flex: 1; background: #282828; border-top: 1px solid #0c0c0c; box-sizing: border-box; display: flex; align-items: center; justify-content: center; }
.artboard { width: 498px; height: 691px; margin-right: 1px; box-sizing: border-box; padding: 12px 12px 13px 13px; background: #000; }
.paper { height: 100%; border-radius: 17px; background: repeating-conic-gradient(#e7e7e7 0 25%, #fff 0 50%) -13px -13px / 16px 16px; box-shadow: inset 0 0 2px 1px #999; }
.vscroll { width: 16px; background: #4b4b4b; border-left: 1px solid #5c5c5c; box-sizing: border-box; }

.status { flex: none; height: 17px; display: flex; align-items: center; background: #4b4b4b; font-family: "Open Sans", sans-serif; }
.status input { width: 81px; padding-left: 7px; box-sizing: border-box; }
.docsize { width: 141px; padding-left: 14px; box-sizing: border-box; }

.dialog { position: absolute; left: 568px; top: 288px; width: 430px; height: 122px; box-sizing: border-box; border: 1px solid #1f8a34; background: #f0f0f0; color: #000; font-family: "Open Sans", sans-serif; font-size: 12px; box-shadow: 0 4px 14px 2px rgba(0, 0, 0, .35); }
.dialog h1 { margin: 0; height: 30px; padding-left: 8px; background: #fff; font-family: Lato, sans-serif; font-size: 12px; line-height: 30px; font-weight: 400; }
.msg { display: flex; padding: 10px 0 0 10px; gap: 15px; }
.msg p { margin: 1px 0 0; line-height: 14px; white-space: nowrap; }
.actions { display: flex; gap: 10px; padding: 17px 0 0 61px; }
.actions button { width: 98px; height: 20px; box-sizing: border-box; border: 1px solid #adadad; background: #e1e1e1; }
.actions .default { border: 2px solid #0a74cf; }

.dock { width: 43px; box-sizing: border-box; border-left: 3px solid #3e3e3e; border-right: 3px solid #3e3e3e; display: flex; flex-direction: column; flex: none; }
.dock-item { flex: none; width: 100%; box-sizing: border-box; border-bottom: 1px solid #3c3c3c; padding-top: 6px; }
.dock-item.joined { border-bottom: 0; }
.dock-item.low { padding: 0 0 5px; }

.panels { width: 250px; box-sizing: border-box; flex: none; display: flex; flex-direction: column; border-right: 1px solid #424242; }
.ptabs { flex: none; height: 17px; background: #424242; display: flex; font-weight: 700; color: #a5a5a5; border-bottom: 1px solid #404040; box-sizing: border-box; }
.ptabs button { padding: 0 8px 0 7px; border-right: 1px solid #3b3b3b; }
.ptabs .active { background: #535353; color: #f2f2f2; margin-bottom: -1px; }
.burger { margin: 4px 5px 0 auto; }
.color { flex: none; height: 293px; box-sizing: border-box; padding: 7px 15px 7px 10px; display: flex; border-bottom: 2px solid #3e3e3e; }
.big { margin: 4px 6px 0 0; }
.field { position: relative; flex: 1; height: 279px; overflow: hidden; background: linear-gradient(to bottom, transparent 0, rgba(0, 0, 0, .27) 50%, rgba(0, 0, 0, .45) 72%, rgba(0, 0, 0, .69) 88%, #000 100%), linear-gradient(to right, #fff, #b2dafc 50%, #6cc6ff 80%, #12b0ff); }
.ring { position: absolute; right: -4px; top: 47px; width: 8px; height: 8px; border: 1px solid #123; border-radius: 50%; }
.hue { position: relative; width: 20px; height: 279px; margin-left: 17px; background: linear-gradient(#ff0033 0, #ff00ff 17%, #4400ff 32%, #0030ff 34%, #0ff 50%, #00e62a 66%, #6f0 69%, #ff0 83%, #ff4a00 100%); }
.knob { position: absolute; left: -10px; top: 108px; }
.libs, .layers { height: 19px; padding-top: 1px; }
.libs button { padding-left: 8px; }
.libs .active { padding-left: 7px; }
.lib-head { flex: none; height: 64px; box-sizing: border-box; border-bottom: 1px solid #404040; padding: 6px 6px 0 9px; }
.lib-row { display: flex; align-items: center; }
.pick { position: relative; width: 176px; height: 20px; margin-right: 8px; }
.pick select { appearance: none; width: 100%; height: 100%; box-sizing: border-box; padding: 0 9px; border: 1px solid #646464; border-radius: 2px; background: #484848; color: #f4f4f4; font-size: 11px; }
.pick svg { position: absolute; right: 5px; top: 7px; }
.mode { width: 21px; height: 22px; border-radius: 2px; margin-right: 4px; }
.mode.on { background: #383838; }
.search { display: flex; align-items: center; height: 28px; border-bottom: 1px solid #6b6b6b; margin: 0 0 0 -1px; padding: 7px 4px 0 0; box-sizing: border-box; }
.search input { flex: 1; min-width: 0; padding-left: 9px; font-size: 11px; height: 18px; outline: 0; }
.search input::placeholder { color: #727272; opacity: 1; }
.drop { flex: 1; min-height: 0; background: #4b4b4b; display: flex; flex-direction: column; align-items: center; padding: 130px 15px 0 0; box-sizing: border-box; text-align: center; color: #a8a8a8; font-size: 11px; overflow: hidden; }
.drop h2 { margin: 17px 0 9px; font-size: 14px; line-height: 20px; font-weight: 400; color: #dcdcdc; }
.drop p { margin: 0; line-height: 15px; white-space: nowrap; }
.help { margin-top: 10px; width: 13px; height: 13px; border: 2px solid #a3a3a3; border-radius: 50%; font-weight: 700; line-height: 13px; }
.drop a { margin-top: 18px; line-height: 18px; color: #a8a8a8; }
.lib-foot { flex: none; height: 25px; border-bottom: 2px solid #3e3e3e; display: flex; align-items: center; gap: 11px; padding: 0 22px 0 11px; }
.spacer { flex: 1; }

.taskbar { flex: none; height: 40px; background: #101010; display: flex; align-items: stretch; color: #fff; }
.apps { display: flex; gap: 1px; }
.apps button { width: 48px; height: 40px; position: relative; }
.apps .current { background: #333; }
.apps .open::after { content: ""; position: absolute; left: 4px; right: 4px; bottom: 0; height: 2px; background: #6cc06c; }
.apps .current::after { left: 0; right: 0; }
.tray { margin-left: auto; display: flex; align-items: center; gap: 6px; }
.clock { width: 71px; display: flex; flex-direction: column; align-items: center; justify-content: center; font-family: "Open Sans", sans-serif; font-size: 12px; line-height: 18px; }
.notes { width: 34px; margin-right: 10px; }
.show-desktop { width: 5px; box-sizing: border-box; border-left: 1px solid #4a4a4a; }
</style>
